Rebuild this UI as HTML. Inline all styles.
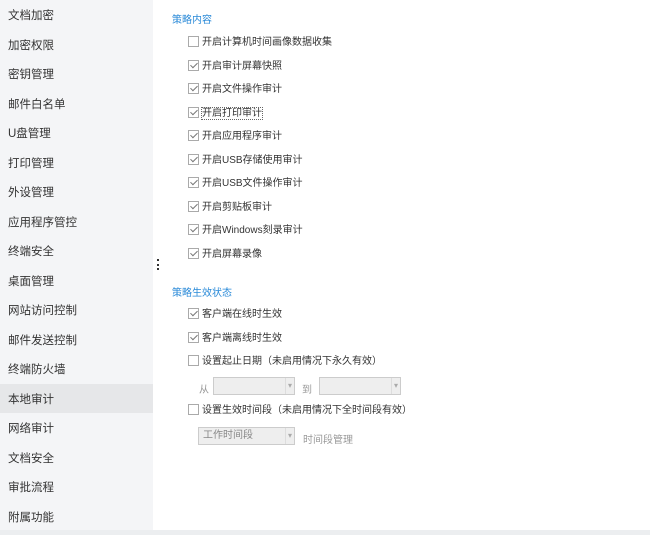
<!DOCTYPE html>
<html><head><meta charset="utf-8"><style>
*{margin:0;padding:0;box-sizing:border-box}
body{width:650px;height:535px;background:#fff;font-family:"Liberation Sans","Noto Sans CJK SC",sans-serif;position:relative;overflow:hidden;color:#333}
.side{position:absolute;left:0;top:0;width:153px;height:530px;background:#f4f5f7}
.si{position:absolute;left:8px;height:29.5px;line-height:29.5px;padding-top:2px;font-size:11.5px;color:#333;width:145px}
.sel{background:#e6e7e9;left:0;padding-left:8px;width:153px}
.bot{position:absolute;left:0;top:530px;width:650px;height:5px;background:#eceef0}
.t{position:absolute;left:172px;font-size:10px;color:#2a8ad8}
.c{position:absolute;left:188px;font-size:10px;color:#333;line-height:12px;white-space:nowrap}
.cb{display:inline-block;width:11px;height:11px;border:1px solid #aaa;background:#fff;vertical-align:-2px;margin-right:3px;position:relative}
.cb.k::after{content:"";position:absolute;left:3px;top:0px;width:3px;height:6px;border:solid #777;border-width:0 1px 1px 0;transform:rotate(45deg)}
.sel2{position:absolute;height:18px;border:1px solid #ccc;background:#eee;font-size:10px;color:#888;line-height:16px;padding-left:4px}
.sel2::after{content:"▾";position:absolute;right:2px;top:0;font-size:8px;color:#aaa;border-left:1px solid #ddd;padding-left:2px}
.g{position:absolute;font-size:10px;color:#999}
</style></head><body>
<div class="side">
<div class="si" style="top:0">文档加密</div>
<div class="si" style="top:29.5px">加密权限</div>
<div class="si" style="top:59px">密钥管理</div>
<div class="si" style="top:88.5px">邮件白名单</div>
<div class="si" style="top:118px">U盘管理</div>
<div class="si" style="top:147.5px">打印管理</div>
<div class="si" style="top:177px">外设管理</div>
<div class="si" style="top:206.5px">应用程序管控</div>
<div class="si" style="top:236px">终端安全</div>
<div class="si" style="top:265.5px">桌面管理</div>
<div class="si" style="top:295px">网站访问控制</div>
<div class="si" style="top:324.5px">邮件发送控制</div>
<div class="si" style="top:354px">终端防火墙</div>
<div class="si sel" style="top:383.5px">本地审计</div>
<div class="si" style="top:413px">网络审计</div>
<div class="si" style="top:442.5px">文档安全</div>
<div class="si" style="top:472px">审批流程</div>
<div class="si" style="top:501.5px">附属功能</div>
</div>
<div style="position:absolute;left:157px;top:259px;width:2px;height:11px;border-left:2px dotted #333"></div>
<div class="bot"></div>
<div class="t" style="top:11px">策略内容</div>
<div class="c" style="top:36px"><span class="cb"></span>开启计算机时间画像数据收集</div>
<div class="c" style="top:59.5px"><span class="cb k"></span>开启审计屏幕快照</div>
<div class="c" style="top:83px"><span class="cb k"></span>开启文件操作审计</div>
<div class="c" style="top:106.5px"><span class="cb k"></span><span style="outline:1px dotted #666">开启打印审计</span></div>
<div class="c" style="top:130px"><span class="cb k"></span>开启应用程序审计</div>
<div class="c" style="top:153.5px"><span class="cb k"></span>开启USB存储使用审计</div>
<div class="c" style="top:177px"><span class="cb k"></span>开启USB文件操作审计</div>
<div class="c" style="top:200.5px"><span class="cb k"></span>开启剪贴板审计</div>
<div class="c" style="top:224px"><span class="cb k"></span>开启Windows刻录审计</div>
<div class="c" style="top:247.5px"><span class="cb k"></span>开启屏幕录像</div>
<div class="t" style="top:284px">策略生效状态</div>
<div class="c" style="top:308px"><span class="cb k"></span>客户端在线时生效</div>
<div class="c" style="top:331.5px"><span class="cb k"></span>客户端离线时生效</div>
<div class="c" style="top:355px"><span class="cb"></span>设置起止日期（未启用情况下永久有效）</div>
<div class="g" style="left:199px;top:381px">从</div>
<div class="sel2" style="left:213px;top:377px;width:82px"></div>
<div class="g" style="left:302px;top:381px">到</div>
<div class="sel2" style="left:319px;top:377px;width:82px"></div>
<div class="c" style="top:404px"><span class="cb"></span>设置生效时间段（未启用情况下全时间段有效）</div>
<div class="sel2" style="left:198px;top:427px;width:97px">工作时间段</div>
<div class="g" style="left:303px;top:431px">时间段管理</div>
</body></html>
